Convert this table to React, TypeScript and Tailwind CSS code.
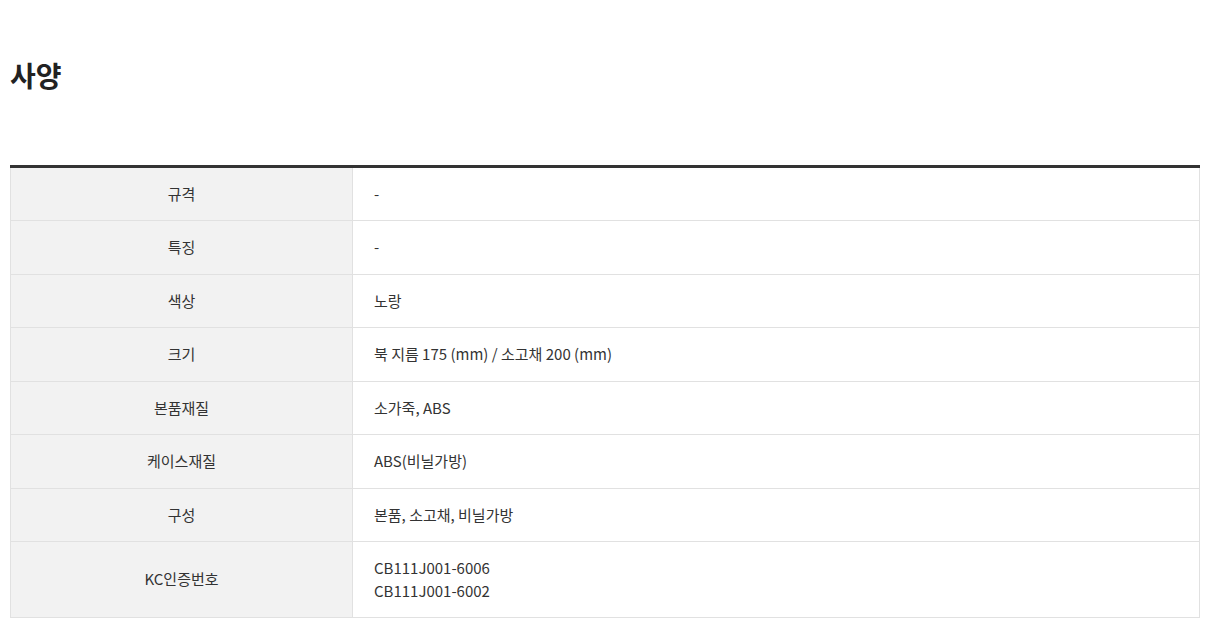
import React from 'react';

const specRows: { label: string; value: string[] }[] = [
  { label: '규격', value: ['-'] },
  { label: '특징', value: ['-'] },
  { label: '색상', value: ['노랑'] },
  { label: '크기', value: ['북 지름 175 (mm) / 소고채 200 (mm)'] },
  { label: '본품재질', value: ['소가죽, ABS'] },
  { label: '케이스재질', value: ['ABS(비닐가방)'] },
  { label: '구성', value: ['본품, 소고채, 비닐가방'] },
  { label: 'KC인증번호', value: ['CB111J001-6006', 'CB111J001-6002'] }
];

export default function App() {
  return (
    <div
      className="min-h-screen bg-white text-[#333]"
      style={{ fontFamily: '"Noto Sans CJK KR", "Noto Sans", sans-serif' }}
    >
      <div className="pl-[10px] pt-[54px] w-[1200px]">
        <h2 className="text-[28px] font-bold leading-[42px] text-[#222]">사양</h2>
        <table className="mt-[68.5px] w-full border-collapse border-t-[3px] border-t-[#333] text-[15px]">
          <tbody>
            {specRows.map((row) => (
              <tr key={row.label} className="border-b border-[#e1e1e1]">
                <td className="w-[342px] border-l border-r border-[#e1e1e1] bg-[#f2f2f2] py-[15px] text-center leading-[22.5px]">
                  {row.label}
                </td>
                <td className="border-r border-[#e1e1e1] py-[15px] pl-[21px] leading-[22.5px]">
                  {row.value.map((v) => (
                    <div key={v}>{v}</div>
                  ))}
                </td>
              </tr>
            ))}
          </tbody>
        </table>
      </div>
    </div>
  );
}
